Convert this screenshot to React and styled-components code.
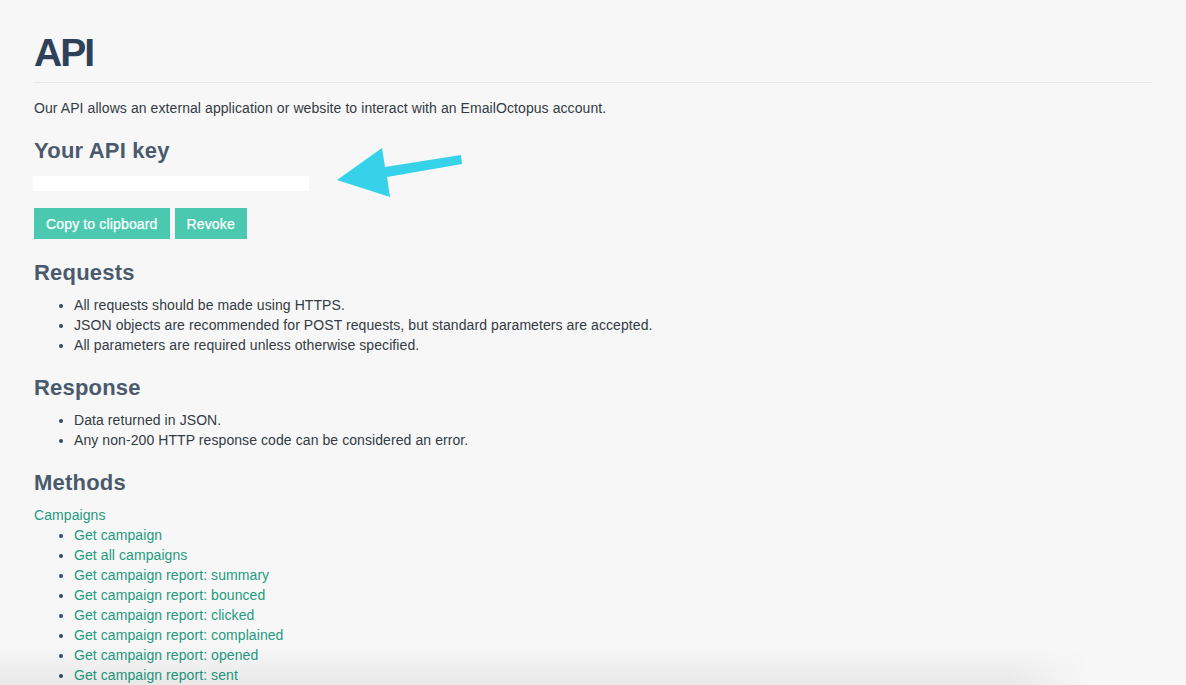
import styled, { createGlobalStyle } from "styled-components";

const GlobalStyle = createGlobalStyle`
    html, body {
        margin: 0;
        background: #f7f7f7;
    }
    body {
        font-family: "Liberation Sans", Arial, sans-serif;
        font-size: 14px;
        line-height: 20px;
        letter-spacing: 0.08px;
        color: #333b44;
    }
`;

const Page = styled.div`
    position: relative;
    padding: 31px 0 0 34px;
    width: 1118px;
`;

const Title = styled.h1`
    margin: 0;
    font-size: 39px;
    line-height: 43px;
    font-weight: 700;
    letter-spacing: -2px;
    color: #2f4159;
`;

const Rule = styled.hr`
    margin: 8px 0 15px;
    border: 0;
    border-top: 1px solid #e8e8e8;
`;

const Intro = styled.p`
    margin: 0;
`;

const Heading = styled.h2`
    margin: 21px 0 10px;
    font-size: 22px;
    line-height: 24px;
    font-weight: 700;
    letter-spacing: 0.2px;
    color: #4a5a6d;
`;

const KeyBox = styled.div`
    margin: 13px 0 0 -1px;
    width: 276px;
    height: 15px;
    background: #ffffff;
`;

const Actions = styled.div`
    display: flex;
    gap: 5px;
    margin: 17px 0 22px;
`;

const Button = styled.button`
    height: 31px;
    padding: 0 12px;
    border: 0;
    border-radius: 0;
    background: #4bc9b0;
    color: #fff;
    font-family: inherit;
    font-size: 14px;
    letter-spacing: 0.15px;
    -webkit-text-stroke: 0.25px #fff;
    cursor: pointer;
`;

const List = styled.ul`
    margin: 0;
    padding-left: 40px;
    list-style: disc;

    li::marker {
        color: #34495e;
    }
`;

const Link = styled.a`
    color: #1f9a80;
    text-decoration: none;
`;

const Group = styled(Link)`
    display: block;
`;

const Arrow = styled.svg`
    position: absolute;
    left: 300px;
    top: 130px;
`;

const BottomShade = styled.div`
    position: fixed;
    left: 0;
    right: 0;
    bottom: 0;
    height: 40px;
    pointer-events: none;
    background: linear-gradient(to bottom, rgba(0, 0, 0, 0), rgba(0, 0, 0, 0.06));
    -webkit-mask-image: linear-gradient(to right, #000 0, #000 1010px, transparent 1090px);
    mask-image: linear-gradient(to right, #000 0, #000 1010px, transparent 1090px);
`;

const requests = [
    "All requests should be made using HTTPS.",
    "JSON objects are recommended for POST requests, but standard parameters are accepted.",
    "All parameters are required unless otherwise specified.",
];

const responses = [
    "Data returned in JSON.",
    "Any non-200 HTTP response code can be considered an error.",
];

const campaigns = [
    "Get campaign",
    "Get all campaigns",
    "Get campaign report: summary",
    "Get campaign report: bounced",
    "Get campaign report: clicked",
    "Get campaign report: complained",
    "Get campaign report: opened",
    "Get campaign report: sent",
];

const App = () => {
    return (
        <>
            <GlobalStyle />
            <Page>
                <Title>API</Title>
                <Rule />
                <Intro>
                    Our API allows an external application or website to interact with an
                    EmailOctopus account.
                </Intro>

                <Heading>Your API key</Heading>
                <KeyBox />
                <Actions>
                    <Button>Copy to clipboard</Button>
                    <Button>Revoke</Button>
                </Actions>

                <Heading>Requests</Heading>
                <List>
                    {requests.map((r) => (
                        <li key={r}>{r}</li>
                    ))}
                </List>

                <Heading>Response</Heading>
                <List>
                    {responses.map((r) => (
                        <li key={r}>{r}</li>
                    ))}
                </List>

                <Heading>Methods</Heading>
                <Group href="#">Campaigns</Group>
                <List>
                    {campaigns.map((c) => (
                        <li key={c}>
                            <Link href="#">{c}</Link>
                        </li>
                    ))}
                </List>

                <Arrow width="170" height="75" viewBox="0 0 170 75">
                    <polygon
                        points="37,50 82,18 85,37 161,25 162,34 87,47 90,67"
                        fill="#36d2ea"
                    />
                </Arrow>
            </Page>
            <BottomShade />
        </>
    );
};

export default App;
